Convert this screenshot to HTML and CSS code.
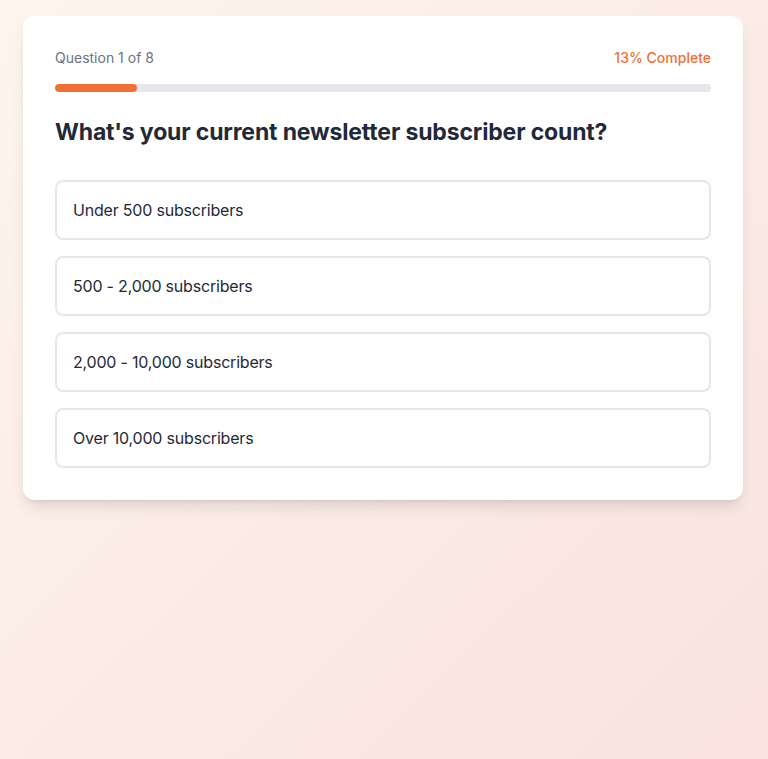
FILE: index.html
```
<!DOCTYPE html>
<html lang="en">
<head>
    <meta charset="UTF-8">
    <meta name="viewport" content="width=device-width, initial-scale=1.0">
    <title>Newsletter Quiz</title>
    <link rel="stylesheet" href="styles.css">
</head>
<body>
    <div class="container">
        <div class="quiz-card">
            <div class="quiz-header">
                <span class="question-count">Question 1 of 8</span>
                <span class="progress-label">13% Complete</span>
            </div>
            <div class="progress-track">
                <div class="progress-fill" style="width: 12.5%"></div>
            </div>
            <h1 class="question-title">What's your current newsletter subscriber count?</h1>
            <div class="options-list">
                <button class="option">Under 500 subscribers</button>
                <button class="option">500 - 2,000 subscribers</button>
                <button class="option">2,000 - 10,000 subscribers</button>
                <button class="option">Over 10,000 subscribers</button>
            </div>
        </div>
    </div>
</body>
</html>
```

FILE: styles.css
```
* {
    margin: 0;
    padding: 0;
    box-sizing: border-box;
    font-family: Inter, "Noto Sans", sans-serif;
}

body {
    min-height: 100vh;
    background: linear-gradient(to bottom right, #fdf5ec, #f9e2e0);
}

.container {
    max-width: 766px;
    padding: 16px 23px;
}

.quiz-card {
    background-color: white;
    border-radius: 12px;
    padding: 32px;
    box-shadow: 0 10px 15px -3px rgba(0, 0, 0, 0.1), 0 4px 6px -4px rgba(0, 0, 0, 0.1);
}

.quiz-header {
    display: flex;
    justify-content: space-between;
    align-items: center;
    font-size: 14px;
    line-height: 20px;
    margin-bottom: 16px;
}

.question-count {
    color: #6b7280;
}

.progress-label {
    color: #ef6f35;
    font-weight: 500;
}

.progress-track {
    height: 8px;
    background-color: #e5e7eb;
    border-radius: 9999px;
    overflow: hidden;
    margin-bottom: 24px;
}

.progress-fill {
    height: 100%;
    background-color: #ef6f35;
    border-radius: 9999px;
}

.question-title {
    font-size: 23px;
    line-height: 32px;
    font-weight: 700;
    color: #1f2937;
    margin-bottom: 32px;
    letter-spacing: -0.15px;
}

.options-list {
    display: flex;
    flex-direction: column;
    gap: 16px;
}

.option {
    display: block;
    width: 100%;
    text-align: left;
    padding: 16px;
    background-color: white;
    border: 2px solid #e5e7eb;
    border-radius: 8px;
    font-size: 16px;
    line-height: 24px;
    color: #1f2937;
    letter-spacing: -0.2px;
    cursor: pointer;
}

.option:hover {
    border-color: #ef6f35;
}
```
